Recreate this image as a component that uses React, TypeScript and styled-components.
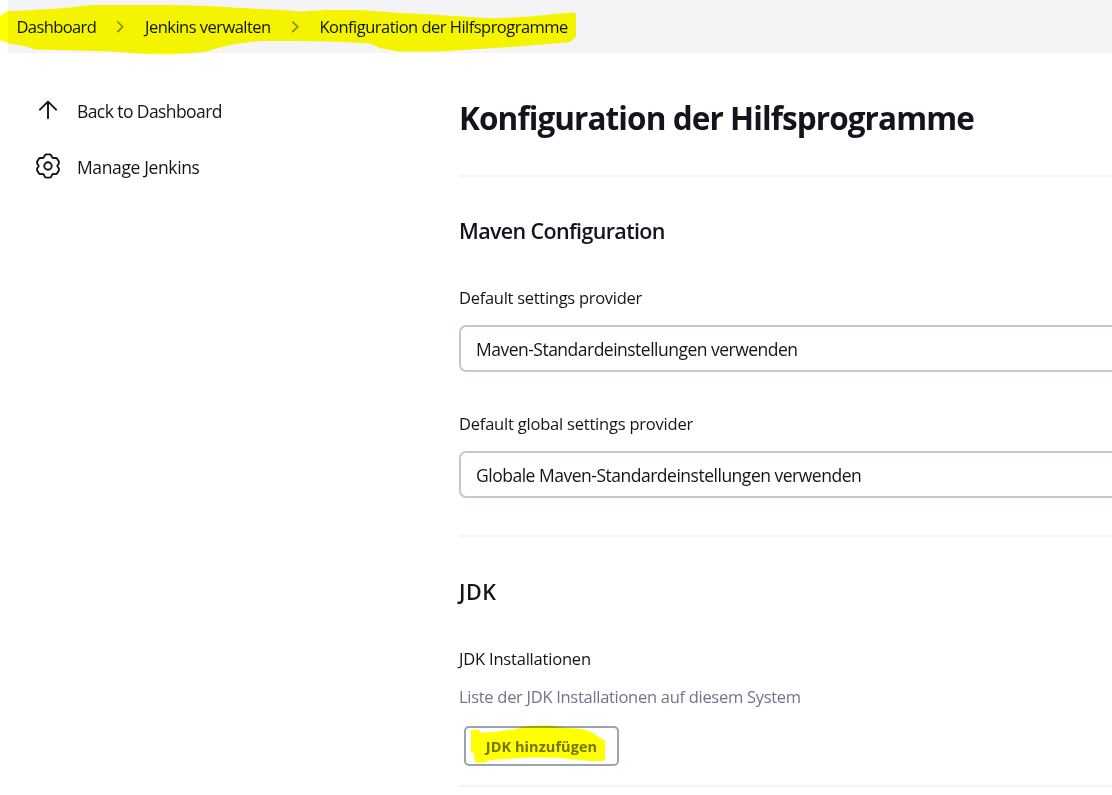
import React from "react";
import styled, { createGlobalStyle } from "styled-components";

const GlobalStyle = createGlobalStyle`
  body {
    margin: 0;
    background: #fff;
    color: #14141f;
    font-family: "Open Sans", "Noto Sans", sans-serif;
    overflow: hidden;
  }
`;

const Page = styled.div`
  position: relative;
  height: 795px;
  overflow: hidden;
`;

const Header = styled.nav`
  box-sizing: border-box;
  display: flex;
  align-items: center;
  height: 53px;
  margin-left: 8px;
  padding-left: 8.5px;
  background: #f4f4f7;
`;

const Crumb = styled.a<{ $width: number; $spacing: number }>`
  width: ${(p) => p.$width}px;
  font-size: 16.5px;
  line-height: 24px;
  letter-spacing: ${(p) => p.$spacing}px;
  white-space: nowrap;
`;

const CrumbArrow = styled.svg`
  width: 12px;
  height: 14px;
  margin: 0 19px 0 17.500px;
  flex: none;
`;

const Body = styled.div`
  display: grid;
  grid-template-columns: 459px 1fr;
`;

const Sidebar = styled.aside`
  display: flex;
  flex-direction: column;
  padding: 29px 0 0 34px;
`;

const Task = styled.a<{ $spacing: number }>`
  display: flex;
  align-items: center;
  gap: 15px;
  height: 56px;
  font-size: 17.5px;
  line-height: 24px;
  letter-spacing: ${(p) => p.$spacing}px;
`;

const TaskLabel = styled.span`
  padding-top: 1px;
`;

const TaskIcon = styled.svg`
  width: 28px;
  height: 28px;
  flex: none;
  fill: none;
  stroke: #14141f;
  stroke-width: 1.9;
  stroke-linecap: round;
  stroke-linejoin: round;
`;

const Main = styled.main`
  min-width: 0;
  padding-top: 45px;
`;

const Title = styled.h1`
  margin: 0 0 37px;
  font-size: 31.5px;
  font-weight: 700;
  line-height: 40px;
  letter-spacing: -0.91px;
  white-space: nowrap;
`;

const Section = styled.section<{ $start: number; $end: number }>`
  border-top: 2px solid #f3f3f8;
  padding: ${(p) => p.$start}px 0 ${(p) => p.$end}px;
`;

const SectionTitle = styled.h2<{ $spacing: number }>`
  margin: 0;
  font-size: 21.5px;
  font-weight: 600;
  line-height: 30px;
  letter-spacing: ${(p) => p.$spacing}px;
`;

const Label = styled.div<{ $spacing: number }>`
  margin-top: 40px;
  font-size: 16.5px;
  line-height: 24px;
  letter-spacing: ${(p) => p.$spacing}px;
`;

const Select = styled.div<{ $spacing: number }>`
  box-sizing: border-box;
  display: flex;
  align-items: center;
  width: 720px;
  height: 47px;
  margin-top: 15px;
  padding: 1px 0 0 15px;
  border: 2px solid #c0cbd0;
  border-radius: 7px;
  font-size: 17.5px;
  letter-spacing: ${(p) => p.$spacing}px;
`;

const Description = styled.div`
  margin-top: 14px;
  font-size: 16.5px;
  line-height: 24px;
  letter-spacing: -0.29px;
  color: #73738c;
`;

const AddButton = styled.button`
  position: relative;
  display: block;
  box-sizing: border-box;
  width: 155px;
  height: 40px;
  margin: 17px 0 0 5px;
  padding: 2px 0 0;
  border: 2px solid #98a4ae;
  border-radius: 5px;
  background: #fff;
  color: #737380;
  font: 700 14.5px/24px "Open Sans", "Noto Sans", sans-serif;
  letter-spacing: 0.06px;
`;

const Divider = styled.hr`
  height: 2px;
  margin: 0;
  border: 0;
  background: #f3f3f8;
`;

const Marker = styled.svg<{ $x: number; $y: number }>`
  position: absolute;
  left: ${(p) => p.$x}px;
  top: ${(p) => p.$y}px;
  fill: #ff0;
  mix-blend-mode: multiply;
  pointer-events: none;
`;

// Outline of a six-toothed gear, centred in a 28 x 28 box.
const gearOutline = Array.from({ length: 120 }, (_, i) => {
  const a = (i * Math.PI) / 60;
  const r = 10.9 + 1.1 * Math.cos(6 * a) - 0.42 * Math.cos(12 * a);
  return `${(14 + r * Math.sin(a)).toFixed(2)},${(14 - r * Math.cos(a)).toFixed(2)}`;
}).join(" ");

const Chevron = () => (
  <CrumbArrow viewBox="0 0 12 14">
    <path d="M3.3 1.5 8.7 6.8 3.3 12.1" fill="none" stroke="#84848c" strokeWidth="1.6" />
  </CrumbArrow>
);

export default function App() {
  return (
    <Page>
      <GlobalStyle />
      <Header>
        <Crumb $width={80} $spacing={-0.6}>Dashboard</Crumb>
        <Chevron />
        <Crumb $width={126} $spacing={-0.52}>Jenkins verwalten</Crumb>
        <Chevron />
        <Crumb $width={250} $spacing={-0.52}>Konfiguration der Hilfsprogramme</Crumb>
      </Header>
      <Body>
        <Sidebar>
          <Task $spacing={-0.58}>
            <TaskIcon viewBox="0 0 28 28">
              <path d="M14 22.3V5.7M5.9 13.7 14 5.6l8.1 8.1" />
            </TaskIcon>
            <TaskLabel>Back to Dashboard</TaskLabel>
          </Task>
          <Task $spacing={-0.37}>
            <TaskIcon viewBox="0 0 28 28">
              <polygon points={gearOutline} />
              <circle cx="14" cy="14" r="3.7" />
            </TaskIcon>
            <TaskLabel>Manage Jenkins</TaskLabel>
          </Task>
        </Sidebar>
        <Main>
          <Title>Konfiguration der Hilfsprogramme</Title>
          <Section $start={39} $end={37}>
            <SectionTitle $spacing={-0.65}>Maven Configuration</SectionTitle>
            <Label $spacing={-0.28}>Default settings provider</Label>
            <Select $spacing={-0.51}>Maven-Standardeinstellungen verwenden</Select>
            <Label $spacing={-0.21}>Default global settings provider</Label>
            <Select $spacing={-0.49}>Globale Maven-Standardeinstellungen verwenden</Select>
          </Section>
          <Section $start={40} $end={19}>
            <SectionTitle $spacing={0.5}>JDK</SectionTitle>
            <Label $spacing={-0.2}>JDK Installationen</Label>
            <Description>Liste der JDK Installationen auf diesem System</Description>
            <AddButton>
              JDK hinzufügen
              <Marker $x={5} $y={-3} width="136" height="38" viewBox="471 725 136 38">
                <path d="M471 730h8l1 2 3 1 15-1.500 17-2 7-2.500 18-1.500h9l9 1.500 27 2.500 7 3 6 4 7 4v20.500h-15l-35-3.500h-28l-29 2-10 1-2 2h-11l-1-9-3.500-2Z" />
              </Marker>
            </AddButton>
          </Section>
          <Divider />
        </Main>
      </Body>
      <Marker $x={0} $y={0} width="580" height="58" viewBox="0 0 580 58">
        <path d="M0 16 4 13l4-2 17-.5L50 9l20-1.500L92 5h78l40 1 30 2 42 2 18 1.500 25-1.500h35l40 3 32 1.500 60 4 38-2 30-3 13-1 3 1.500V37l-6 5-20 2-40 3-70 4.500h-42L380 48l-10-4.500-40-2-30-.5h-40l-25 3-17 4-13 4-35 2.500-25-.5-35-2.500-50-1.500-25-.5-8-2.500-5-1.500-12-1.500-10-4Z" />
      </Marker>
    </Page>
  );
}
